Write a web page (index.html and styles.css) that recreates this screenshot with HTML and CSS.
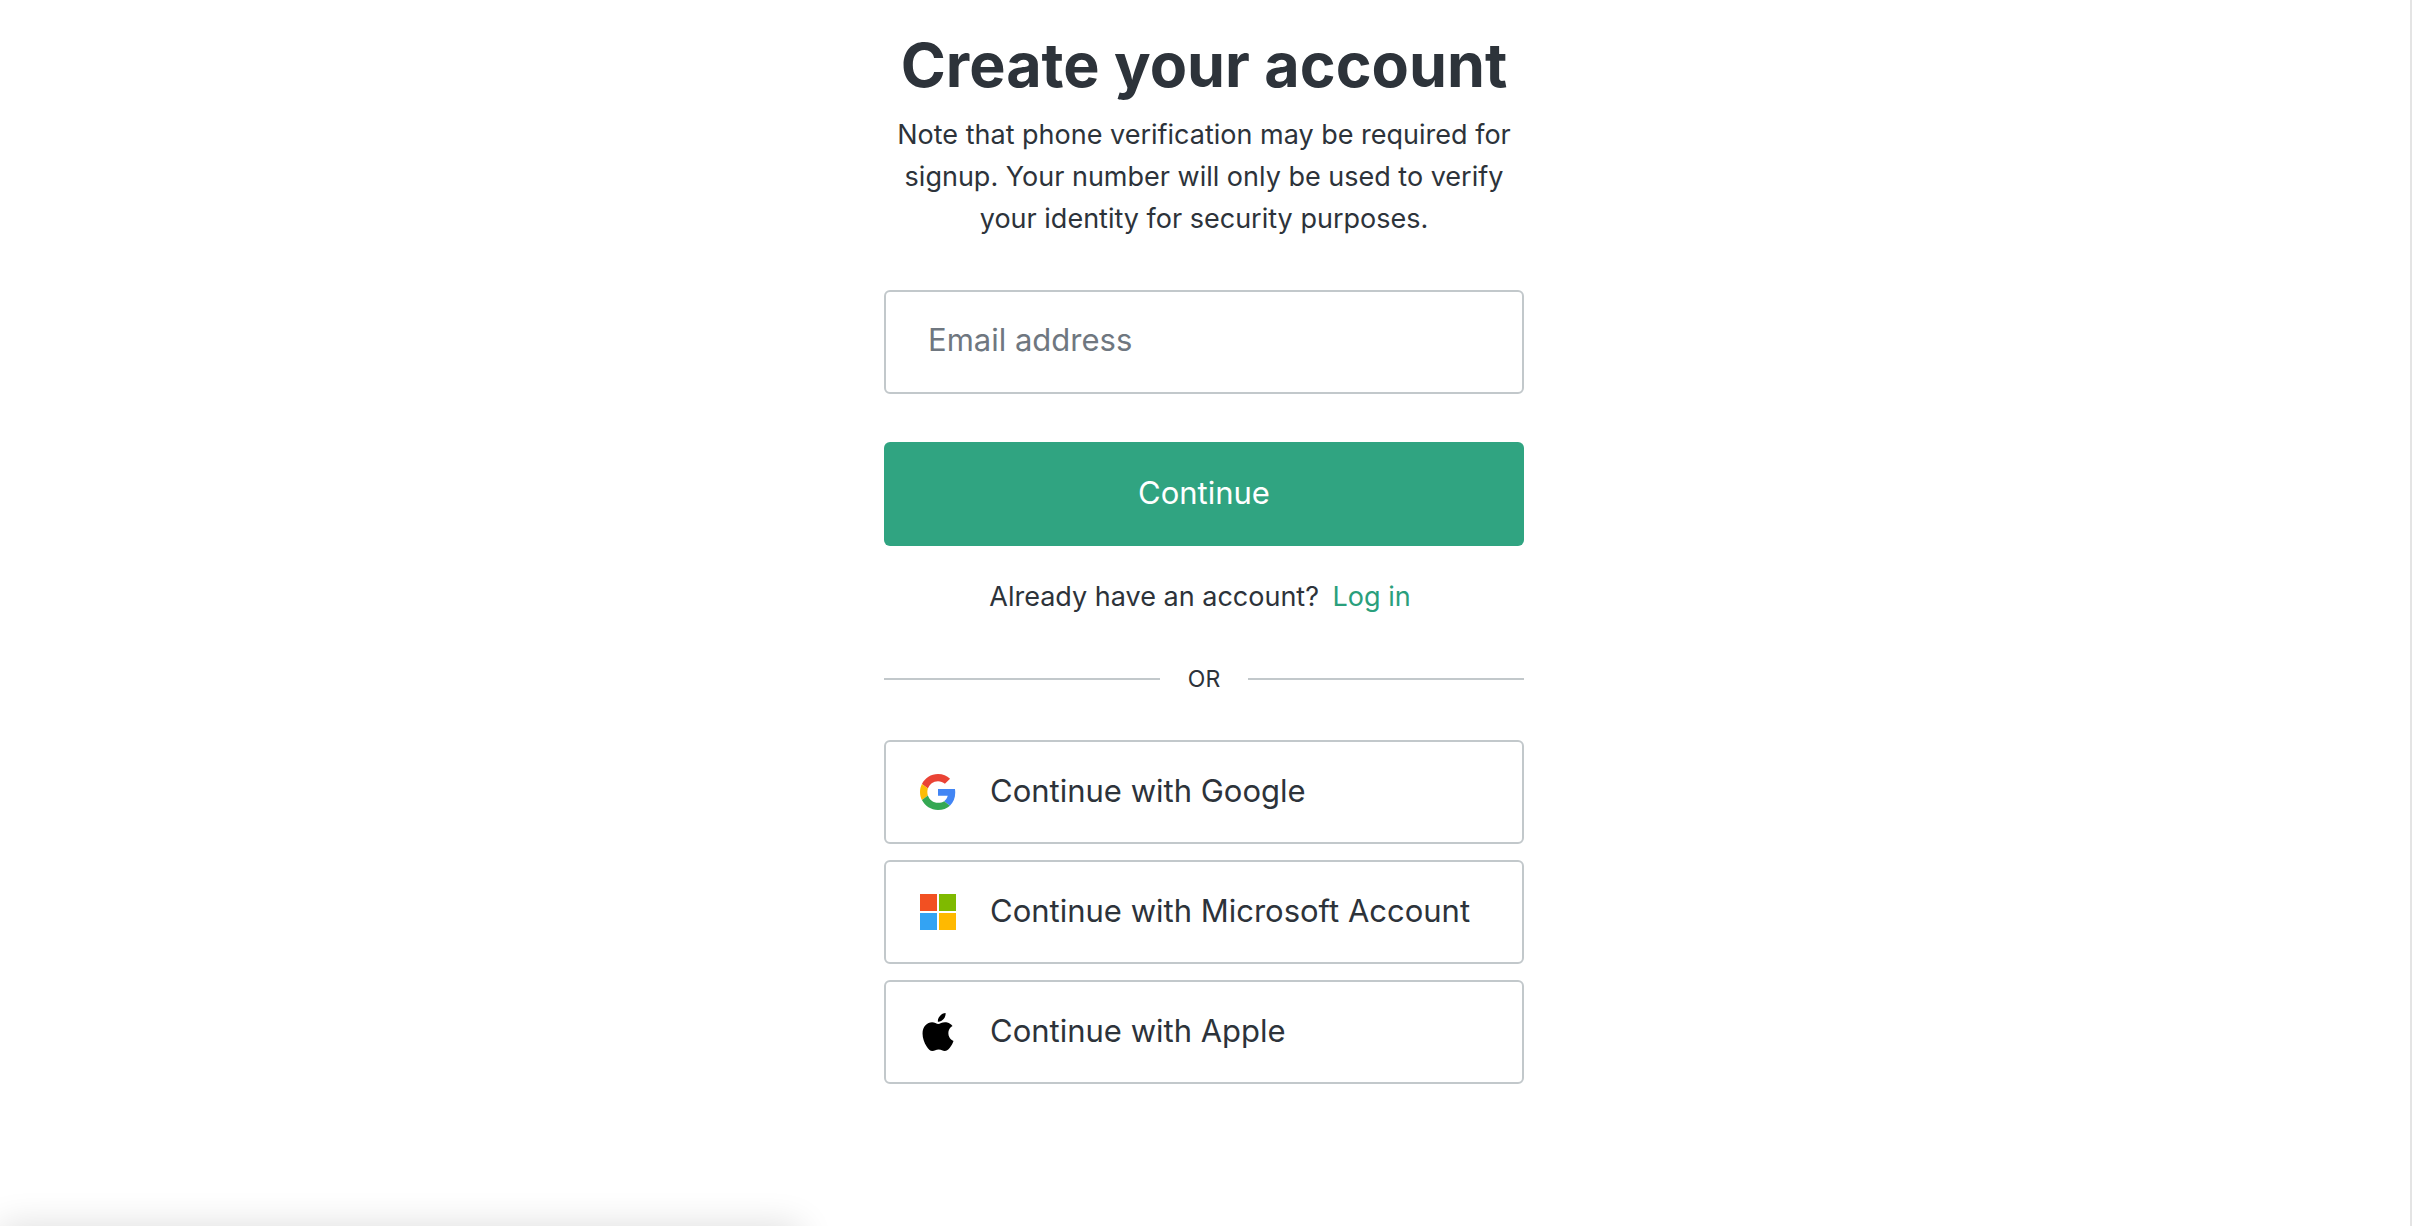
FILE: index.html
```
<!DOCTYPE html>
<html lang="en">
<head>
  <meta charset="UTF-8">
  <meta name="viewport" content="width=device-width, initial-scale=1.0">
  <title>Create your account</title>
  <link rel="stylesheet" href="styles.css">
</head>
<body>
  <main class="signup">
    <h1>Create your account</h1>
    <p class="intro">Note that phone verification may be required for signup. Your number will only be used to verify your identity for security purposes.</p>

    <form class="email-form">
      <input class="email-input" type="email" id="email" placeholder="Email address" aria-label="Email address">
      <button class="continue" type="submit">Continue</button>
    </form>

    <p class="login">Already have an account? <a href="#login">Log in</a></p>

    <div class="divider">OR</div>

    <div class="providers">
      <button class="provider" type="button">
        <svg class="icon" viewBox="0 0 48 48" aria-hidden="true">
          <path fill="#EA4335" d="M24 9.5c3.54 0 6.71 1.22 9.21 3.6l6.85-6.85C35.9 2.38 30.47 0 24 0 14.62 0 6.51 5.38 2.56 13.22l7.98 6.19C12.43 13.72 17.74 9.5 24 9.5z"/>
          <path fill="#4285F4" d="M46.98 24.55c0-1.57-.15-3.09-.38-4.55H24v9.02h12.94c-.58 2.96-2.26 5.48-4.78 7.18l7.73 6c4.51-4.18 7.09-10.36 7.09-17.65z"/>
          <path fill="#FBBC05" d="M10.53 28.59c-.48-1.45-.76-2.99-.76-4.59s.27-3.14.76-4.59l-7.98-6.19C.92 16.46 0 20.12 0 24c0 3.88.92 7.54 2.56 10.78l7.97-6.19z"/>
          <path fill="#34A853" d="M24 48c6.48 0 11.93-2.13 15.89-5.81l-7.73-6c-2.15 1.45-4.92 2.3-8.16 2.3-6.26 0-11.57-4.22-13.47-9.91l-7.98 6.19C6.51 42.62 14.62 48 24 48z"/>
        </svg>
        <span>Continue with Google</span>
      </button>
      <button class="provider" type="button">
        <svg class="icon" viewBox="0 0 36 36" aria-hidden="true">
          <path fill="#F25022" d="M0 0h17v17H0z"/>
          <path fill="#7FBA00" d="M19 0h17v17H19z"/>
          <path fill="#33A3F3" d="M0 19h17v17H0z"/>
          <path fill="#FFB900" d="M19 19h17v17H19z"/>
        </svg>
        <span>Continue with Microsoft Account</span>
      </button>
      <button class="provider" type="button">
        <svg class="icon apple" viewBox="0 0 814 1000" aria-hidden="true">
          <path d="M788.1 340.9c-5.8 4.5-108.2 62.2-108.2 190.5 0 148.4 130.3 200.9 134.2 202.2-.6 3.2-20.7 71.9-68.7 141.9-42.8 61.6-87.5 123.1-155.5 123.1s-85.5-39.5-164-39.5c-76.5 0-103.7 40.8-165.9 40.8s-105.6-57-155.5-127C46.7 790.7 0 663 0 541.8c0-194.4 126.4-297.5 250.8-297.5 66.1 0 121.2 43.4 162.7 43.4 39.5 0 101.1-46 176.3-46 28.5 0 130.9 2.6 198.3 99.2zm-234-181.5c31.1-36.9 53.1-88.1 53.1-139.3 0-7.1-.6-14.3-1.9-20.1-50.6 1.9-110.8 33.7-147.1 75.8-28.5 32.4-55.1 83.6-55.1 135.5 0 7.8 1.3 15.6 1.9 18.1 3.2.6 8.4 1.3 13.6 1.3 45.4 0 102.5-30.4 135.5-71.3z"/>
        </svg>
        <span>Continue with Apple</span>
      </button>
    </div>
  </main>
  <div class="status-shadow"></div>
</body>
</html>
```
FILE: styles.css
```
* {
  box-sizing: border-box;
}

body {
  margin: 0;
  min-height: 100vh;
  padding: 24px 2px 24px 0;
  border-right: 2px solid #e4e4e4;
  overflow: hidden;
  background: #fff;
  color: #2d333a;
  font-family: Inter, "Liberation Sans", sans-serif;
  font-size: 27px;
  line-height: 42px;
}

.signup {
  max-width: 640px;
  margin: 0 auto;
}

h1 {
  margin: 0;
  font-size: 61px;
  font-weight: 700;
  line-height: 82px;
  text-align: center;
  white-space: nowrap;
}

.intro {
  margin: 8px 0 50px;
  padding: 0 8px;
  text-align: center;
}

.email-form {
  display: grid;
  gap: 48px;
}

.email-input,
.continue,
.provider {
  width: 100%;
  height: 104px;
  border: 2px solid #c2c8cb;
  border-radius: 6px;
  background: #fff;
  color: inherit;
  font-family: inherit;
  font-size: 31px;
}

.email-input {
  padding: 0 42px 6px;
}

.email-input::placeholder {
  color: #6f7780;
  opacity: 1;
}

.continue {
  padding-bottom: 4px;
  border: none;
  background: #30a481;
  color: #fff;
  cursor: pointer;
}

.login {
  margin: 30px 0 40px;
  padding-right: 8px;
  text-align: center;
}

.login a {
  margin-left: 6px;
  color: #2a9f7c;
  text-decoration: none;
}

.divider {
  display: flex;
  align-items: center;
  gap: 28px;
  margin-bottom: 40px;
  font-size: 23px;
}

.divider::before,
.divider::after {
  content: "";
  flex: 1;
  height: 2px;
  background: #c2c8cb;
}

.providers {
  display: grid;
  gap: 16px;
}

.provider {
  display: flex;
  align-items: center;
  gap: 34px;
  padding: 0 34px;
  text-align: left;
  white-space: nowrap;
  cursor: pointer;
}

.provider span {
  padding-bottom: 4px;
}

.icon {
  flex: none;
  width: 36px;
  height: 36px;
}

.icon.apple {
  height: 38px;
}

/* soft shadow rising from below the window */
.status-shadow {
  position: fixed;
  top: 100%;
  left: 0;
  width: 800px;
  height: 40px;
  box-shadow: 0 0 36px rgba(0, 0, 0, 0.14);
}
```
